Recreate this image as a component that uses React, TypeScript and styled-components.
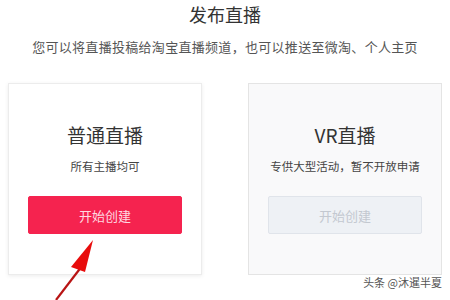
import styled, { createGlobalStyle } from 'styled-components';

const GlobalStyle = createGlobalStyle`
  html, body {
    margin: 0;
    padding: 0;
    background: #ffffff;
  }
  body {
    font-family: "Noto Sans CJK SC", "Liberation Sans", sans-serif;
  }
`;

const Page = styled.div`
  position: relative;
  width: 450px;
  height: 300px;
  overflow: hidden;
  background: #ffffff;
`;

const Header = styled.div`
  display: flex;
  flex-direction: column;
  align-items: center;
  padding-top: 2px;
`;

const Title = styled.h1`
  margin: 0;
  font-size: 18px;
  line-height: 24px;
  font-weight: 400;
  color: #333333;
`;

const Subtitle = styled.p`
  margin: 12px 0 0;
  font-size: 13px;
  line-height: 18px;
  letter-spacing: 0.3px;
  color: #555555;
`;

const Cards = styled.div`
  display: flex;
  gap: 46px;
  margin: 27px 0 0 8px;
`;

const Card = styled.div<{ $disabled?: boolean }>`
  box-sizing: border-box;
  width: 194px;
  height: 192px;
  display: flex;
  flex-direction: column;
  align-items: center;
  padding-top: 40px;
  border: 1px solid ${(p) => (p.$disabled ? '#e4e4e4' : '#ececec')};
  background: ${(p) => (p.$disabled ? '#f9f9fa' : '#ffffff')};
  box-shadow: ${(p) => (p.$disabled ? 'none' : '0 1px 4px rgba(0, 0, 0, 0.08)')};
`;

const CardTitle = styled.h2`
  margin: 0;
  font-size: 19px;
  line-height: 22px;
  font-weight: 400;
  color: #333333;
`;

const CardText = styled.p`
  margin: 12px 0 0;
  font-size: 11.5px;
  line-height: 16px;
  color: #444444;
`;

const Action = styled.button<{ $disabled?: boolean }>`
  box-sizing: border-box;
  width: 154px;
  height: 38px;
  margin-top: 22px;
  border-radius: 2px;
  font-family: inherit;
  font-size: 13px;
  border: 1px solid ${(p) => (p.$disabled ? '#e0e4ea' : '#f5234f')};
  background: ${(p) => (p.$disabled ? '#eef1f5' : '#f5234f')};
  color: ${(p) => (p.$disabled ? '#c3c8d0' : '#ffd9e0')};
  cursor: ${(p) => (p.$disabled ? 'not-allowed' : 'pointer')};
`;

const Watermark = styled.span`
  position: absolute;
  right: 8px;
  bottom: 11px;
  font-size: 11px;
  line-height: 13px;
  color: #555555;
`;

const Arrow = styled.svg`
  position: absolute;
  left: 50px;
  top: 236px;
`;

export default function App() {
  return (
    <Page>
      <GlobalStyle />
      <Header>
        <Title>发布直播</Title>
        <Subtitle>您可以将直播投稿给淘宝直播频道，也可以推送至微淘、个人主页</Subtitle>
      </Header>
      <Cards>
        <Card>
          <CardTitle>普通直播</CardTitle>
          <CardText>所有主播均可</CardText>
          <Action>开始创建</Action>
        </Card>
        <Card $disabled>
          <CardTitle>VR直播</CardTitle>
          <CardText>专供大型活动，暂不开放申请</CardText>
          <Action $disabled disabled>开始创建</Action>
        </Card>
      </Cards>
      <Arrow width="50" height="64" viewBox="0 0 50 64">
        <line x1="32" y1="30" x2="6" y2="64" stroke="#b81414" strokeWidth="2.2" />
        <polygon points="43,4 21,31 35,36" fill="#e80c0c" />
      </Arrow>
      <Watermark>头条 @沐暹半夏</Watermark>
    </Page>
  );
}
